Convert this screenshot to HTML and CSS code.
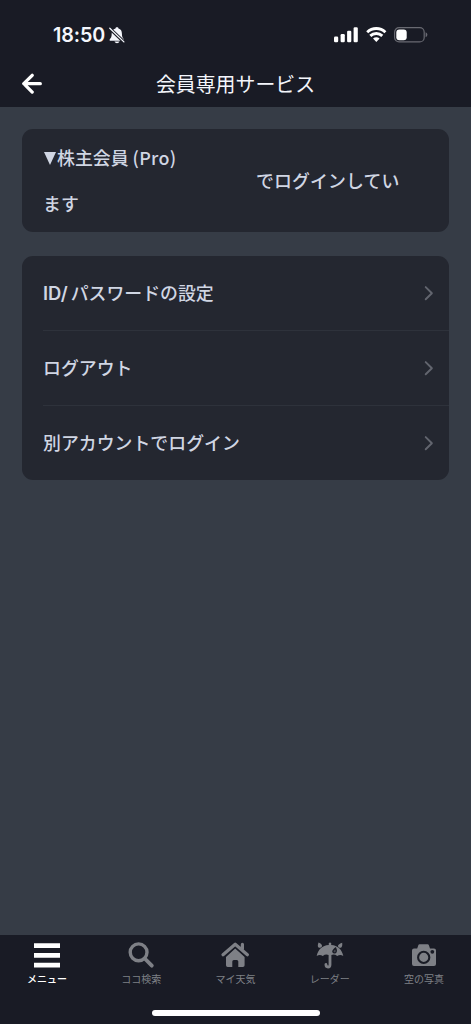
FILE: index.html
```html
<!DOCTYPE html>
<html lang="ja">
<head>
<meta charset="utf-8">
<title>会員専用サービス</title>
<link rel="stylesheet" href="styles.css">
</head>
<body>
<div class="screen">
  <header class="top">
    <div class="status">
      <div class="clock">
        <span>18:50</span>
        <svg class="bell" width="16" height="17" viewBox="0 0 16 17">
          <path d="M8 .3C9 .3 9.4.8 9.5 1.500C11.900 2.200 12.900 4 12.900 6.400C12.900 10 13.700 10.800 14.800 12.300V13.700H.7V12.300C2 10.800 2.700 10 2.700 6.400C2.700 4 4 2.200 6.500 1.500C6.600.8 7 .3 8 .3ZM5.500 14.600H10.500C10 15.900 9 16.300 8 16.300C7 16.300 6 15.900 5.500 14.600Z" fill="#f4f6fc"/>
          <path d="M.3 1L15.500 15.500" stroke="#191b25" stroke-width="3.200"/>
          <path d="M.8 1.300L14.900 14.900" stroke="#f4f6fc" stroke-width="1.300" stroke-linecap="round"/>
        </svg>
      </div>
      <div class="indicators">
        <svg width="25" height="16" viewBox="0 0 25 16" fill="#fff">
          <rect x="0" y="9.500" width="4.200" height="5.700" rx="1.200"/><rect x="6.600" y="7" width="4.200" height="8.200" rx="1.200"/><rect x="13.100" y="3.700" width="4.200" height="11.500" rx="1.200"/><rect x="19.600" y=".3" width="4.200" height="14.900" rx="1.200"/>
        </svg>
        <svg width="21" height="16" viewBox="0 0 21 16" fill="none" stroke="#fff" stroke-width="2.900">
          <path d="M1.200 5.200C6.400.3 14.200.3 19.400 5.200"/><path d="M4.300 8.900C7.700 5.700 12.900 5.700 16.300 8.900"/><path d="M7 11.600C9 9.900 11.600 9.900 13.600 11.600L10.300 15Z" fill="#fff" stroke="none"/>
        </svg>
        <svg width="34" height="16" viewBox="0 0 34 16">
          <rect x=".6" y=".7" width="29.600" height="14.200" rx="4.500" fill="none" stroke="#696a72" stroke-width="1.200"/><rect x="2.300" y="2.400" width="10.400" height="10.800" rx="3" fill="#fff"/><path d="M31.600 5.300Q33.400 6 33.400 7.800T31.600 10.300Z" fill="#696a72"/>
        </svg>
      </div>
    </div>
    <div class="titlebar">
      <svg class="back" width="22" height="22" viewBox="0 0 22 22" fill="none" stroke="#fff" stroke-width="3.300" stroke-linecap="round" stroke-linejoin="round"><path d="M19.300 10.700H3M11.200 2.300L2.800 10.700L11.200 19.100"/></svg>
      <h1>会員専用サービス</h1>
    </div>
  </header>
  <main>
    <section class="card account">
      <p><span class="triangle"></span>株主会員 <span class="pro">(Pro)</span></p>
      <p class="login">でログインしてい</p>
      <p>ます</p>
    </section>
    <nav class="card list">
      <a class="row"><span><span class="latin">ID/</span>パスワードの設定</span><svg width="10" height="16" viewBox="0 0 10 16"><path d="M1.700 2.100L7.900 8.200L1.700 14.300"/></svg></a>
      <a class="row"><span>ログアウト</span><svg width="10" height="16" viewBox="0 0 10 16"><path d="M1.700 2.100L7.900 8.200L1.700 14.300"/></svg></a>
      <a class="row"><span>別アカウントでログイン</span><svg width="10" height="16" viewBox="0 0 10 16"><path d="M1.700 2.100L7.900 8.200L1.700 14.300"/></svg></a>
    </nav>
  </main>
  <footer>
    <nav class="tabs">
      <a class="tab active"><svg width="30" height="28" viewBox="0 0 30 28"><path d="M2 2.200H28V6.900H2ZM2 12H28V16.700H2ZM2 21.700H28V26.400H2Z"/></svg><span>メニュー</span></a>
      <a class="tab"><svg width="30" height="28" viewBox="0 0 30 28"><circle cx="12.600" cy="11.300" r="8.400" fill="none" stroke="currentColor" stroke-width="3.400"/><path d="M18.700 17.500L25.800 24.700" stroke="currentColor" stroke-width="3.800" stroke-linecap="round"/></svg><span>ココ検索</span></a>
      <a class="tab"><svg width="30" height="28" viewBox="0 0 30 28"><path d="M6 16L15.200 7.500L24.600 16V24.300Q24.600 26 22.900 26H18.300V20.500Q18.300 19 16.800 19H13.800Q12.300 19 12.300 20.500V26H7.700Q6 26 6 24.300Z"/><path d="M3 14L15.200 3.300L27.400 14" fill="none" stroke="#191b25" stroke-width="5.200"/><path d="M3 13.700L15.200 3.200L27.400 13.700M22.400 3.300V8" fill="none" stroke="currentColor" stroke-width="3.200" stroke-linecap="round" stroke-linejoin="round"/></svg><span>マイ天気</span></a>
      <a class="tab"><svg width="30" height="28" viewBox="0 0 30 28"><path d="M1.700 15C3 8.800 7.300 4.500 13.800 4.100V2.100Q15 .9 16.200 2.100V4.100C22.700 4.500 27 8.800 28.300 15Q25.300 13 22.200 15Q19.400 12.700 16.300 14H13.700Q10.600 12.700 7.800 15Q4.700 13 1.700 15Z"/><path d="M15 12V23.700Q15 26 13 26Q11 26 10.900 23.500" fill="none" stroke="currentColor" stroke-width="2.800" stroke-linecap="round"/><path d="M3.500 1.500Q7.400 3.100 7 5.200Q6 7.300 3.900 6.700Q1.900 5.700 3.500 1.500ZM27.200 1.700Q22.700 3.300 23 5.200Q23.700 7.300 25.700 6.700Q27.700 5.900 27.200 1.700Z"/><path d="M20.900 6Q16.900 8.800 17.200 11Q18.700 13.600 21.100 12Q22.900 10.100 20.900 6Z" fill="#191b25"/><path d="M20.200 8.400Q18.300 9.800 18.600 10.800Q19.400 11.700 20.400 11Q21.200 10.200 20.200 8.400Z" opacity=".45"/></svg><span>レーダー</span></a>
      <a class="tab"><svg width="30" height="28" viewBox="0 0 30 28"><path d="M5 7.500H8.200L9.300 4.200Q9.600 3.300 10.600 3.300H18.600Q19.600 3.300 19.900 4.200L21 7.500H25Q27 7.500 27 9.500V23Q27 25 25 25H5Q3 25 3 23V9.500Q3 7.500 5 7.500Z"/><circle cx="14.700" cy="16.400" r="5.600" fill="none" stroke="#191b25" stroke-width="2.100"/><circle cx="23.300" cy="10.800" r="1.900" fill="#191b25"/></svg><span>空の写真</span></a>
    </nav>
    <div class="home"></div>
  </footer>
</div>
</body>
</html>
```
FILE: styles.css
```css
* { box-sizing: border-box; }
body { margin: 0; font-family: "Noto Sans CJK JP", sans-serif; background: #363c46; }
svg { display: block; flex: none; }
h1, p { margin: 0; }
.screen { height: 1024px; display: flex; flex-direction: column; background: #363c46; }
.top { height: 107px; background: #191b25; color: #fff; }
.status { height: 60px; padding: 27px 43px 0 53px; display: flex; justify-content: space-between; align-items: flex-start; }
.clock { display: flex; gap: 4px; font: 600 19.700px/16px Inter, sans-serif; color: #f4f6fc; letter-spacing: -.1px; }
.indicators { display: flex; gap: 7px; }
.titlebar { height: 47px; display: grid; grid-template-columns: 40px 1fr 40px; align-items: center; }
.back { margin-left: 21px; }
.titlebar h1 { text-align: center; font-size: 19.900px; line-height: 28px; font-weight: 400; color: #f4f6fc; }
main { flex: 1; padding: 22px 22px 0; display: flex; flex-direction: column; gap: 24px; }
.card { background: #242730; border-radius: 11px; color: #d0d6e3; font-size: 17.900px; font-weight: 500; }
.account { height: 103px; padding: 17px 21px 0; }
.account p { line-height: 23px; height: 23px; white-space: nowrap; }
.account .login { padding-left: 213px; letter-spacing: .1px; }
.triangle { display: inline-block; width: 12px; height: 13px; margin: 0 1px; background: currentColor; clip-path: polygon(0 0, 100% 0, 50% 100%); }
.pro { letter-spacing: .25px; }
.list { padding-left: 21px; }
.row { height: 75px; padding: 0 15px 1px 0; display: flex; align-items: center; justify-content: space-between; border-bottom: 1px solid #2e323b; }
.row > span { line-height: 24px; margin-top: -1px; }
.row:last-child { border-bottom: 0; height: 74px; }
.row path { fill: none; stroke: #62656e; stroke-width: 1.900; stroke-linecap: round; stroke-linejoin: round; }
.latin { font-family: Inter, sans-serif; font-weight: 600; font-size: 18.400px; margin-right: 3px; }
footer { height: 89px; background: #191b25; display: flex; flex-direction: column; }
.tabs { display: grid; grid-template-columns: repeat(5, 1fr); padding-top: 6px; height: 75px; }
.tab { display: flex; flex-direction: column; align-items: center; gap: 2px; color: #7e8086; font-size: 10px; line-height: 15px; }
.tab svg { fill: currentColor; }
.tab.active { color: #fff; font-weight: 500; }
.home { width: 168px; height: 6px; border-radius: 3px; background: #fff; align-self: center; }
```
